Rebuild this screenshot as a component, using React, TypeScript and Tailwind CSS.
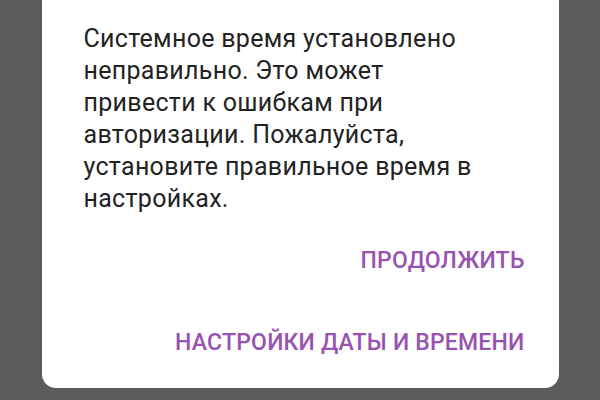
import React from "react";

export default function App() {
  return (
    <div
      className="w-[600px] h-[400px] bg-[#5c5c5c] overflow-hidden"
      style={{ fontFamily: "Roboto, 'Noto Sans', sans-serif" }}
    >
      <div className="mx-auto w-[517px] bg-white rounded-b-[14px] pt-[23px] pb-[33px] pl-[42px] pr-[34px]">
        <p className="text-[25px] leading-[32px] tracking-[0.3px] text-[#232323]">
          Системное время установлено
          <br />
          неправильно. Это может
          <br />
          привести к ошибкам при
          <br />
          авторизации. Пожалуйста,
          <br />
          установите правильное время в
          <br />
          настройках.
        </p>
        <div className="flex flex-col items-end mt-[34px] gap-[58px]">
          <button className="text-[23px] leading-[24px] tracking-[0.2px] font-medium text-[#9853b0] uppercase">
            Продолжить
          </button>
          <button className="text-[23px] leading-[24px] tracking-[0.2px] font-medium text-[#9853b0] uppercase">
            Настройки даты и времени
          </button>
        </div>
      </div>
    </div>
  );
}
